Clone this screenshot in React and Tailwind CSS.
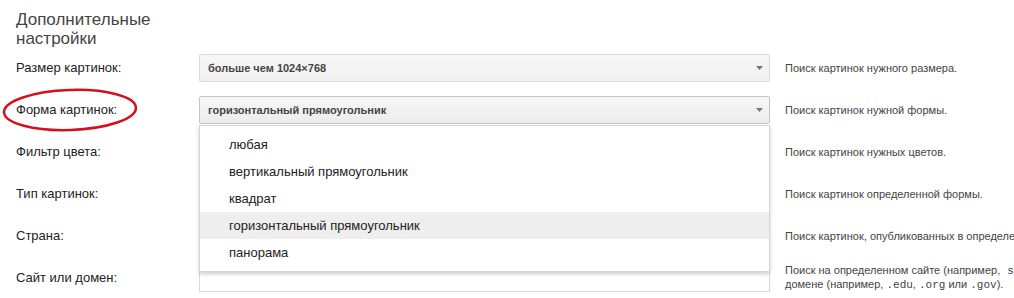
import React from "react";

const rows = [
  { label: "Размер картинок:", value: "больше чем 1024×768", hint: "Поиск картинок нужного размера." },
  { label: "Форма картинок:", value: "горизонтальный прямоугольник", hint: "Поиск картинок нужной формы.", open: true },
  { label: "Фильтр цвета:", value: "", hint: "Поиск картинок нужных цветов." },
  { label: "Тип картинок:", value: "", hint: "Поиск картинок определенной формы." },
  { label: "Страна:", value: "", hint: "Поиск картинок, опубликованных в определенном регионе." },
];

const options = [
  "любая",
  "вертикальный прямоугольник",
  "квадрат",
  "горизонтальный прямоугольник",
  "панорама",
];

const Arrow = () => (
  <svg width="7" height="4" viewBox="0 0 7 4" className="shrink-0">
    <polygon points="0,0 7,0 3.5,4" fill="#777" />
  </svg>
);

const Select = ({ value, open }) => (
  <div className="relative">
    <div
      className={
        open
          ? "h-[28px] flex items-center justify-between pl-2 pr-[6px] rounded-[2px] border border-[#c6c6c6] bg-gradient-to-b from-[#f6f6f6] to-[#ececec]"
          : "h-[28px] flex items-center justify-between pl-2 pr-[6px] rounded-[2px] border border-[#dcdcdc] bg-gradient-to-b from-[#f6f6f6] to-[#f1f1f1]"
      }
    >
      <span className="text-[11px] font-bold text-[#444]">{value}</span>
      <Arrow />
    </div>
    {open && (
      <div className="absolute left-0 right-0 top-[29px] z-10 bg-white border border-[#d6d6d6] shadow-[0_2px_4px_rgba(0,0,0,0.2)] pt-[5px] pb-[5px]">
        {options.map((o) => (
          <div
            key={o}
            className={
              o === "горизонтальный прямоугольник"
                ? "h-[27px] flex items-center pl-[29px] text-[13px] text-[#222] bg-[#eeeeee]"
                : "h-[27px] flex items-center pl-[29px] text-[13px] text-[#222]"
            }
          >
            {o}
          </div>
        ))}
      </div>
    )}
  </div>
);

export default function App() {
  return (
    <div className="relative w-[1014px] h-[298px] overflow-hidden bg-white font-['Liberation_Sans',Arial,sans-serif]">
      <div className="h-[47px] pl-4 pt-[10px] text-[17px] leading-[19px] text-[#444]">
        Дополнительные
        <br />
        настройки
      </div>

      {rows.map((r) => (
        <div key={r.label} className="flex items-center h-[42px]">
          <div className="w-[199px] shrink-0 pl-4 text-[13px] text-[#222]">{r.label}</div>
          <div className="w-[571px] shrink-0">
            <Select value={r.value} open={r.open} />
          </div>
          <div className="ml-[15px] text-[11px] text-[#444] whitespace-nowrap">{r.hint}</div>
        </div>
      ))}

      <div className="flex items-center h-[42px]">
        <div className="w-[199px] shrink-0 pl-4 text-[13px] text-[#222]">Сайт или домен:</div>
        <div className="w-[571px] shrink-0 h-[28px] border border-[#d9d9d9] bg-white" />
        <div className="ml-[15px] text-[11px] leading-[13px] text-[#444] whitespace-nowrap">
          Поиск на определенном сайте (например,{" "}
          <span className="ml-[4px] font-['Liberation_Mono',monospace]">sfmoma.org</span>) или
          <br />
          домене (например, <span className="font-['Liberation_Mono',monospace]">.edu</span>,{" "}
          <span className="font-['Liberation_Mono',monospace]">.org</span> или{" "}
          <span className="font-['Liberation_Mono',monospace]">.gov</span>).
        </div>
      </div>

      <svg className="absolute left-0 top-[86px] pointer-events-none" width="150" height="50" viewBox="0 0 150 50">
        <ellipse cx="70" cy="24" rx="66" ry="20" fill="none" stroke="#d0121e" strokeWidth="2.5" transform="rotate(-2 70 24)" />
      </svg>
    </div>
  );
}
